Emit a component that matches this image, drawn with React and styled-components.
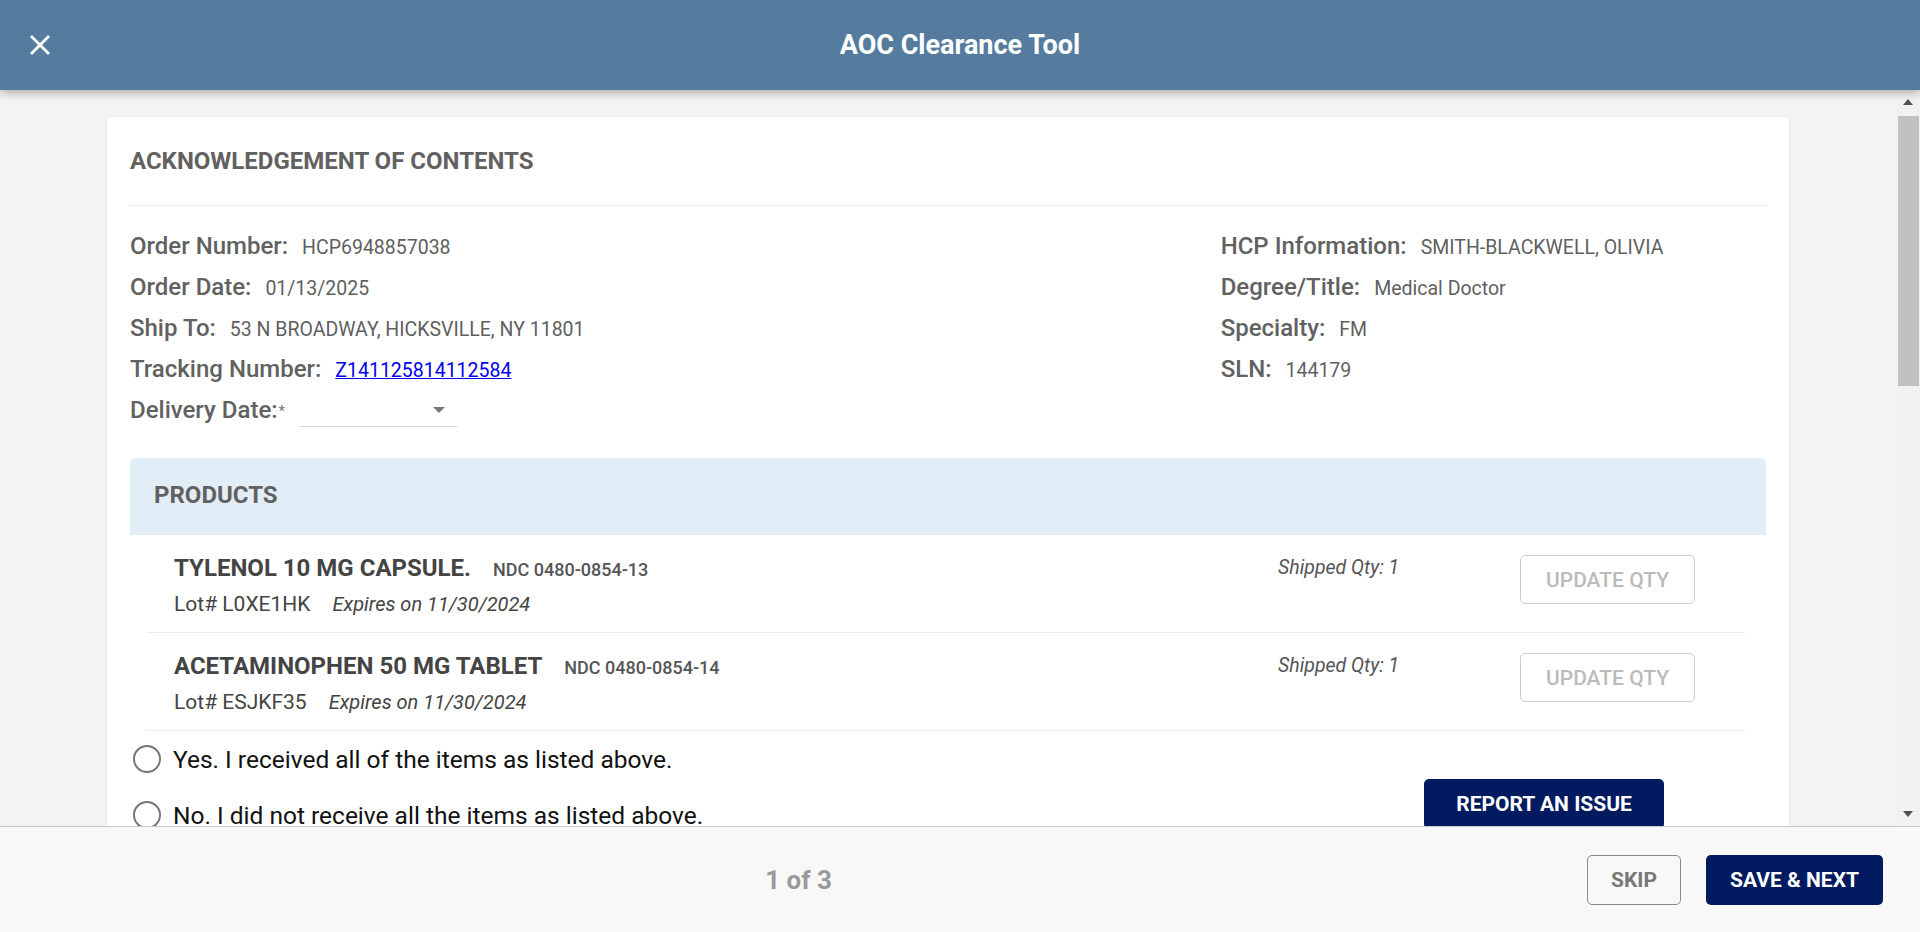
import React from 'react';
import styled, { createGlobalStyle } from 'styled-components';

const GlobalStyle = createGlobalStyle`
  html, body {
    margin: 0;
    padding: 0;
    height: 100%;
    overflow: hidden;
  }
  body {
    font-family: Roboto, "Liberation Sans", Arial, sans-serif;
    color: #5f5f5f;
  }
  #root {
    height: 100%;
  }
`;

const Shell = styled.div`
  display: flex;
  flex-direction: column;
  height: 932px;
  background: #f4f3f1;
`;

const Header = styled.header`
  flex: 0 0 90px;
  display: grid;
  grid-template-columns: 80px 1fr 80px;
  align-items: center;
  background: #557c9f;
  box-shadow: 0 3px 8px rgba(0, 0, 0, 0.28);
  position: relative;
  z-index: 2;
`;

const CloseButton = styled.button`
  width: 40px;
  height: 40px;
  margin-left: 20px;
  padding: 0;
  border: none;
  background: transparent;
  display: flex;
  align-items: center;
  justify-content: center;
  cursor: pointer;
`;

const HeaderTitle = styled.h1`
  margin: 0;
  text-align: center;
  color: #fff;
  font-size: 27px;
  font-weight: 700;
`;

// body area: scrolled content plus its scrollbar column
const Body = styled.div`
  flex: 1;
  min-height: 0;
  display: flex;
`;

const Scroller = styled.main`
  flex: 1;
  overflow: hidden;
`;

const ScrollTrack = styled.div`
  flex: 0 0 24px;
  display: flex;
  flex-direction: column;
  background: #f1f1f1;
`;

const ScrollArrow = styled.div`
  height: 24px;
  display: flex;
  align-items: center;
  justify-content: center;
`;

const ScrollThumb = styled.div`
  height: 270px;
  margin: 2px 1px 0 2px;
  background: #c1c1c1;
`;

const TrackFill = styled.div`
  flex: 1;
`;

const Card = styled.section`
  margin: 26px 106px;
  min-height: 1820px;
  background: #fff;
  border: 1px solid #ebebeb;
  border-radius: 5px;
  padding: 0 23px;
`;

const CardTitle = styled.h2`
  margin: 0;
  height: 88px;
  display: flex;
  align-items: center;
  font-size: 24px;
  font-weight: 700;
  color: #616161;
  border-bottom: 1px solid #ececec;
`;

const InfoGrid = styled.div`
  display: grid;
  grid-template-columns: 2fr 1fr;
  padding-top: 20px;
`;

const InfoColumn = styled.div`
  display: flex;
  flex-direction: column;
`;

const Field = styled.div`
  display: flex;
  align-items: baseline;
  height: 41px;
  line-height: 41px;
`;

const Label = styled.span`
  font-size: 24px;
  font-weight: 500;
  color: #616161;
  margin-right: ${(p) => (p.$tight ? '0' : '14px')};
`;

const Value = styled.span`
  font-size: 19.5px;
  color: #5f5f5f;
`;

const TrackingLink = styled.a`
  font-size: 19.5px;
  color: #0000ee;
  text-decoration: underline;
`;

const Required = styled.sup`
  font-size: 15px;
  color: #777;
  margin-left: 1px;
  margin-right: 14px;
  vertical-align: baseline;
  position: relative;
  top: -2px;
`;

const DateSelect = styled.div`
  width: 159px;
  height: 34px;
  align-self: flex-start;
  margin-top: 3px;
  border-bottom: 1px solid #dcdcdc;
  display: flex;
  align-items: center;
  justify-content: flex-end;
  padding-right: 13px;
  box-sizing: border-box;
`;

const Caret = styled.span`
  width: 0;
  height: 0;
  border-left: 6px solid transparent;
  border-right: 6px solid transparent;
  border-top: 6px solid #777;
`;

const ProductsPanel = styled.div`
  margin-top: 27px;
`;

const ProductsHeader = styled.div`
  height: 77px;
  box-sizing: border-box;
  padding: 0 0 3px 24px;
  display: flex;
  align-items: center;
  background: #e1eef8;
  border-radius: 6px 6px 0 0;
  font-size: 24px;
  font-weight: 700;
  color: #616161;
`;

const ProductList = styled.div`
  padding: 0 21px 0 17px;
`;

const ProductRow = styled.div`
  display: grid;
  grid-template-columns: 1fr 242px 175px;
  padding: 20px 50px 15px 27px;
  border-bottom: 1px solid #ececec;
`;

const ProductInfo = styled.div`
  display: flex;
  flex-direction: column;
  gap: 10px;
`;

const NameLine = styled.div`
  display: flex;
  align-items: baseline;
  height: 26px;
  line-height: 26px;
`;

const ProductName = styled.span`
  font-size: 24px;
  font-weight: 700;
  color: #444;
  margin-right: 22px;
`;

const Ndc = styled.span`
  font-size: 18px;
  font-weight: 500;
  color: #555;
`;

const LotLine = styled.div`
  height: 26px;
  line-height: 26px;
  font-size: 21px;
  color: #444;
`;

const Expires = styled.em`
  margin-left: 22px;
  font-size: 20px;
  color: #444;
`;

const ShippedQty = styled.em`
  font-size: 19.5px;
  color: #555;
  line-height: 26px;
`;

const OutlineButton = styled.button`
  height: 49px;
  border: 1px solid ${(p) => p.$border || '#ccc'};
  border-radius: 5px;
  background: transparent;
  color: ${(p) => p.$color || '#bbb'};
  font-family: inherit;
  font-size: 21px;
  font-weight: ${(p) => p.$weight || 500};
  padding: 0;
  cursor: pointer;
`;

const QtyButton = styled(OutlineButton)`
  width: 175px;
`;

const AnswerRow = styled.div`
  display: flex;
  justify-content: space-between;
  align-items: flex-start;
`;

const RadioGroup = styled.div`
  display: flex;
  flex-direction: column;
`;

const RadioOption = styled.label`
  display: flex;
  align-items: center;
  height: 56px;
  font-size: 24.5px;
  color: #111;
  cursor: pointer;
`;

const RadioCircle = styled.span`
  width: 24px;
  height: 24px;
  border: 2.5px solid #767676;
  border-radius: 50%;
  margin: 0 12px 0 3px;
  flex: 0 0 auto;
`;

const NavyButton = styled.button`
  height: 50px;
  width: ${(p) => p.$width};
  border: none;
  border-radius: 5px;
  background: #021a5f;
  color: #fff;
  font-family: inherit;
  font-size: 21px;
  font-weight: 700;
  padding: 0;
  cursor: pointer;
`;

const ReportButton = styled(NavyButton)`
  margin-top: 48px;
  margin-right: 102px;
`;

const Footer = styled.footer`
  flex: 0 0 106px;
  display: flex;
  align-items: center;
  padding-right: 37px;
  background: #f8f8f8;
  border-top: 1px solid #c8c8c8;
  box-sizing: border-box;
`;

const Pager = styled.div`
  flex: 1;
  text-align: center;
  font-size: 26px;
  font-weight: 700;
  color: #999;
  padding-left: 10px;
`;

const FooterActions = styled.div`
  display: flex;
  gap: 25px;
`;

const SkipButton = styled(OutlineButton)`
  width: 94px;
  height: 50px;
`;

const CloseIcon = () => (
  <svg width="20" height="20" viewBox="0 0 20 20">
    <path d="M2 2 L18 18 M18 2 L2 18" stroke="#fff" strokeWidth="2.8" strokeLinecap="square" />
  </svg>
);

const Arrow = ({ up }) => (
  <svg width="12" height="8" viewBox="0 0 12 8">
    <polygon points={up ? '1,7 11,7 6,1' : '1,1 11,1 6,7'} fill="#505050" />
  </svg>
);

const orderFields = [
  { label: 'Order Number:', value: 'HCP6948857038' },
  { label: 'Order Date:', value: '01/13/2025' },
  { label: 'Ship To:', value: '53 N BROADWAY, HICKSVILLE, NY 11801' },
  { label: 'Tracking Number:', value: 'Z141125814112584', link: true },
];

const hcpFields = [
  { label: 'HCP Information:', value: 'SMITH-BLACKWELL, OLIVIA' },
  { label: 'Degree/Title:', value: 'Medical Doctor' },
  { label: 'Specialty:', value: 'FM' },
  { label: 'SLN:', value: '144179' },
];

const products = [
  { name: 'TYLENOL 10 MG CAPSULE.', ndc: 'NDC 0480-0854-13', lot: 'L0XE1HK', expires: '11/30/2024', qty: 1 },
  { name: 'ACETAMINOPHEN 50 MG TABLET', ndc: 'NDC 0480-0854-14', lot: 'ESJKF35', expires: '11/30/2024', qty: 1 },
];

export default function App() {
  return (
    <Shell>
      <GlobalStyle />
      <Header>
        <CloseButton aria-label="Close">
          <CloseIcon />
        </CloseButton>
        <HeaderTitle>AOC Clearance Tool</HeaderTitle>
        <div />
      </Header>

      <Body>
        <Scroller>
          <Card>
            <CardTitle>ACKNOWLEDGEMENT OF CONTENTS</CardTitle>
            <InfoGrid>
              <InfoColumn>
                {orderFields.map((f) => (
                  <Field key={f.label}>
                    <Label>{f.label}</Label>
                    {f.link ? <TrackingLink href="#">{f.value}</TrackingLink> : <Value>{f.value}</Value>}
                  </Field>
                ))}
                <Field>
                  <Label $tight>Delivery Date:</Label>
                  <Required>*</Required>
                  <DateSelect>
                    <Caret />
                  </DateSelect>
                </Field>
              </InfoColumn>
              <InfoColumn>
                {hcpFields.map((f) => (
                  <Field key={f.label}>
                    <Label>{f.label}</Label>
                    <Value>{f.value}</Value>
                  </Field>
                ))}
              </InfoColumn>
            </InfoGrid>

            <ProductsPanel>
              <ProductsHeader>PRODUCTS</ProductsHeader>
              <ProductList>
                {products.map((p) => (
                  <ProductRow key={p.name}>
                    <ProductInfo>
                      <NameLine>
                        <ProductName>{p.name}</ProductName>
                        <Ndc>{p.ndc}</Ndc>
                      </NameLine>
                      <LotLine>
                        Lot# {p.lot}
                        <Expires>Expires on {p.expires}</Expires>
                      </LotLine>
                    </ProductInfo>
                    <ShippedQty>Shipped Qty: {p.qty}</ShippedQty>
                    <QtyButton>UPDATE QTY</QtyButton>
                  </ProductRow>
                ))}
              </ProductList>
            </ProductsPanel>

            <AnswerRow>
              <RadioGroup>
                <RadioOption>
                  <RadioCircle />
                  Yes. I received all of the items as listed above.
                </RadioOption>
                <RadioOption>
                  <RadioCircle />
                  No. I did not receive all the items as listed above.
                </RadioOption>
              </RadioGroup>
              <ReportButton $width="240px">REPORT AN ISSUE</ReportButton>
            </AnswerRow>
          </Card>
        </Scroller>
        <ScrollTrack>
          <ScrollArrow>
            <Arrow up />
          </ScrollArrow>
          <ScrollThumb />
          <TrackFill />
          <ScrollArrow>
            <Arrow />
          </ScrollArrow>
        </ScrollTrack>
      </Body>

      <Footer>
        <Pager>1 of 3</Pager>
        <FooterActions>
          <SkipButton $border="#8a8a8a" $color="#777" $weight={700}>SKIP</SkipButton>
          <NavyButton $width="177px">SAVE &amp; NEXT</NavyButton>
        </FooterActions>
      </Footer>
    </Shell>
  );
}
